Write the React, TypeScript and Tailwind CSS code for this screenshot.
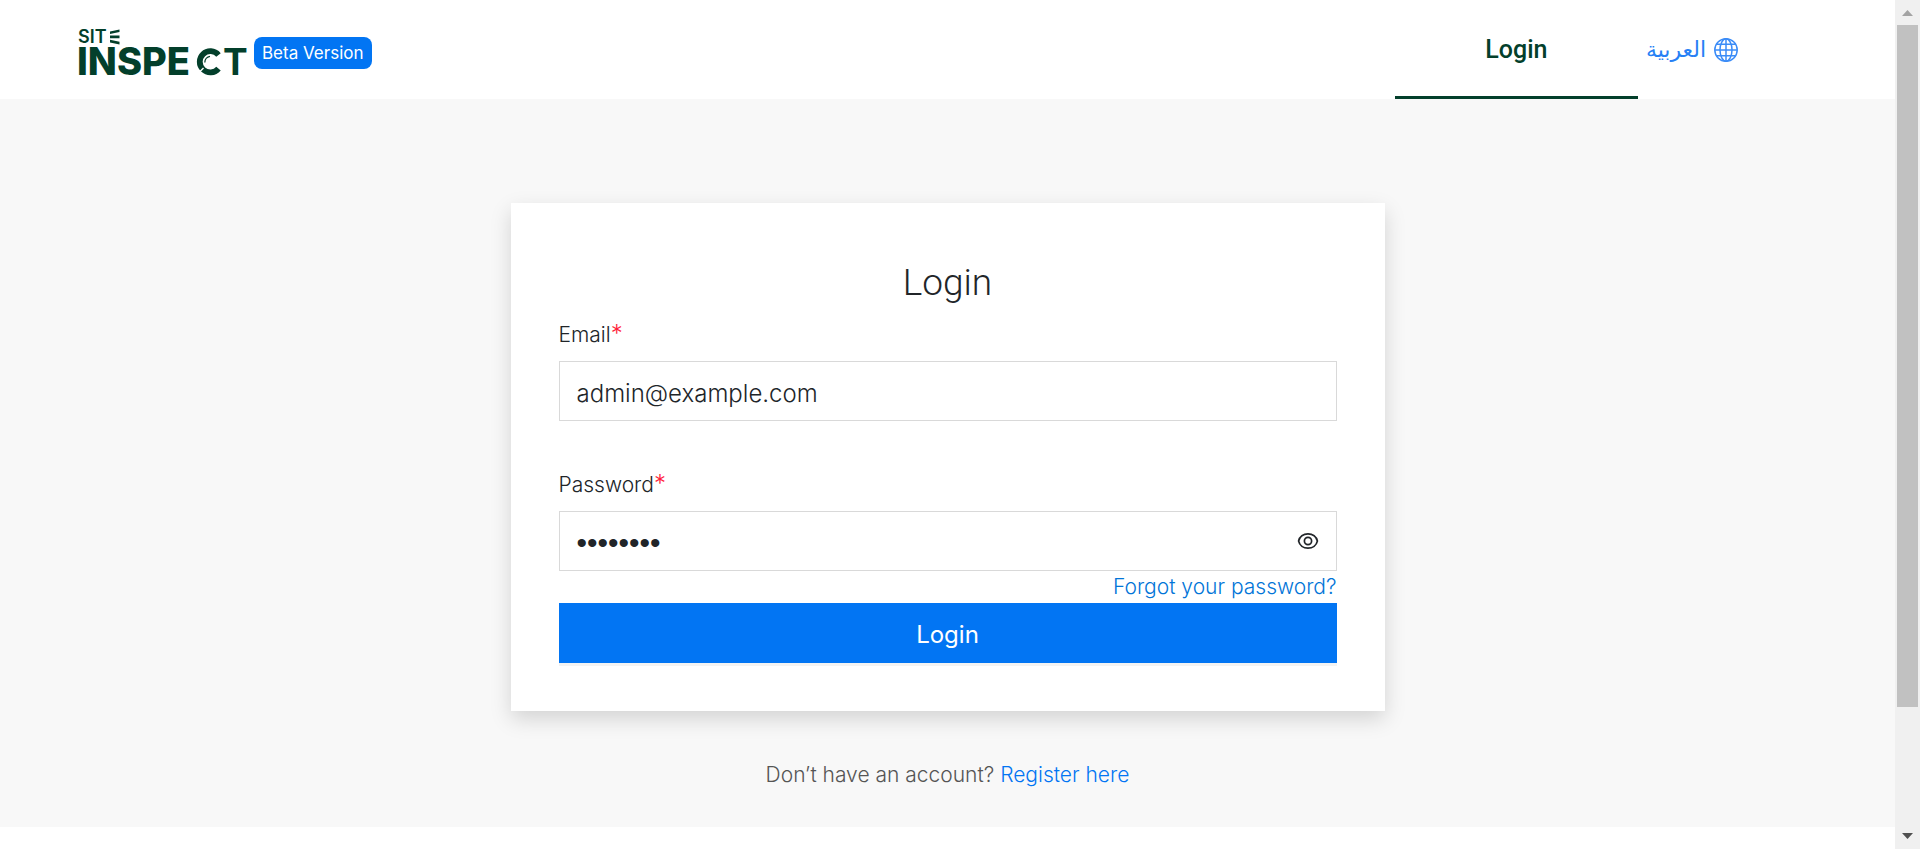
import React, { useState } from "react";

function Logo() {
  return (
    <svg
      viewBox="0 0 170 50"
      role="img"
      aria-label="Site Inspect"
      className="h-[50px] w-[170px] overflow-visible fill-[#033f2b] font-['Inter',sans-serif]"
    >
      <text x="-1" y="15" fontSize="18" fontWeight="600">SIT</text>
      <path d="M31 3.4 L40.5 1.4 V4 L31 6 Z M31 7.6 H40.5 V10.2 H31 Z M31 11.8 L40.5 13.8 V16.4 L31 14.4 Z" />
      <text x="-2" y="47" fontSize="38" fontWeight="800">INSPE</text>
      <path
        d="M139.5 27 A10.6 10.6 0 1 0 139.5 40.6"
        fill="none"
        stroke="#033f2b"
        strokeWidth="5.8"
      />
      <path d="M118.5 46 L124.5 40" stroke="#ffffff" strokeWidth="1.4" />
      <path
        d="M125.8 34.6 A6.2 6.2 0 0 1 131 28.4"
        fill="none"
        stroke="#033f2b"
        strokeWidth="1.3"
      />
      <text x="144" y="47" fontSize="37" fontWeight="700">T</text>
    </svg>
  );
}

function GlobeIcon() {
  return (
    <svg
      viewBox="0 0 24 24"
      aria-hidden="true"
      className="size-6 fill-none stroke-[#3b8cf7] stroke-[1.5]"
    >
      <circle cx="12" cy="12" r="11.2" />
      <ellipse cx="12" cy="12" rx="6" ry="11.2" />
      <path d="M12 .8V23.2M.8 12H23.2M2.8 6.2H21.2M2.8 17.8H21.2" />
    </svg>
  );
}

function EyeIcon() {
  return (
    <svg
      viewBox="0 0 22 18"
      aria-hidden="true"
      className="h-[18px] w-[22px] fill-none stroke-[#212529] stroke-[1.7]"
    >
      <path d="M1.6 9C2.6 4.6 6.4 1.8 11 1.8S19.4 4.6 20.4 9C19.4 13.4 15.6 16.2 11 16.2S2.6 13.4 1.6 9Z" />
      <circle cx="11" cy="9" r="3.6" />
    </svg>
  );
}

function Required() {
  return <span className="text-2xl leading-none text-[#ff1f3d]">*</span>;
}

const labelClass = "block text-[21px] leading-8 text-[#212529]";
const inputClass =
  "block h-[60px] w-full border border-[#d9d9d9] bg-white pl-[17px] text-[#212529] outline-none";

export default function App() {
  const [visible, setVisible] = useState(false);

  return (
    <div className="flex h-screen overflow-hidden bg-white font-['Inter','DejaVu_Sans',sans-serif] font-light">
      <div className="min-w-0 flex-1">
        <header className="flex h-[99px] items-stretch justify-between bg-white pr-[157px] pl-[79px]">
          <div className="flex items-center gap-[5px] pt-1.5">
            <Logo />
            <span className="rounded-lg bg-[#0275f3] px-2 py-1 text-[17px] leading-6 font-normal text-white">
              Beta Version
            </span>
          </div>
          <nav className="flex items-stretch gap-2">
            <a
              href="#login"
              className="flex w-[243px] items-center justify-center border-b-3 border-[#033f2b] pt-1 font-['Roboto',sans-serif] text-[25px] font-medium text-[#033f2b]"
            >
              Login
            </a>
            <a
              href="#ar"
              className="flex items-center gap-2 text-[22px] font-normal text-[#2680f5]"
            >
              <span lang="ar">العربية</span>
              <GlobeIcon />
            </a>
          </nav>
        </header>

        <main className="flex flex-col items-center bg-[#f8f8f8] pt-[104px] pb-9">
          <form
            onSubmit={(e) => e.preventDefault()}
            className="w-full max-w-[874px] bg-white p-12 shadow-[0_8px_20px_rgba(0,0,0,0.15)]"
          >
            <h1 className="pt-2 text-center font-['Roboto',sans-serif] text-[37px] leading-12 font-light text-[#212529]">
              Login
            </h1>

            <div className="pt-3">
              <label htmlFor="email" className={labelClass}>
                Email
                <Required />
              </label>
              <div className="pt-2.5">
                <input
                  id="email"
                  type="email"
                  defaultValue="admin@example.com"
                  className={`${inputClass} pt-1 text-2xl`}
                />
              </div>
            </div>

            <div className="pt-12">
              <label htmlFor="password" className={labelClass}>
                Password
                <Required />
              </label>
              <div className="relative mt-2.5">
                <input
                  id="password"
                  type={visible ? "text" : "password"}
                  defaultValue="password"
                  className={
                    visible
                      ? `${inputClass} pt-1 text-2xl`
                      : `${inputClass} pt-1 font-['Liberation_Sans',sans-serif] text-3xl`
                  }
                />
                <button
                  type="button"
                  aria-label="Show password"
                  onClick={() => setVisible(!visible)}
                  className="absolute inset-y-0 right-[18px] flex items-center"
                >
                  <EyeIcon />
                </button>
              </div>
            </div>

            <div className="text-right text-[21px] leading-8">
              <a href="#forgot" className="text-[#0275d8]">
                Forgot your password?
              </a>
            </div>

            <button
              type="submit"
              className="block h-[60px] w-full bg-[#0275f3] pt-1 text-2xl font-normal text-white shadow-[0_3px_0_#f3f3f3]"
            >
              Login
            </button>
          </form>

          <p className="pt-12 text-[21px] leading-8 text-[#555555]">
            Don’t have an account?{" "}
            <a href="#register" className="text-[#0275f3]">
              Register here
            </a>
          </p>
        </main>
      </div>

      <div
        aria-hidden="true"
        className="flex w-[25px] flex-col items-center bg-[#f0f0f0]"
      >
        <svg viewBox="0 0 25 25" className="size-[25px] shrink-0 fill-[#a3a3a3]">
          <path d="M7 16H18L12.5 10Z" />
        </svg>
        <div className="w-[21px] grow-[853] basis-0 bg-[#c1c1c1]" />
        <div className="grow-[147] basis-0" />
        <svg viewBox="0 0 25 25" className="size-[25px] shrink-0 fill-[#505050]">
          <path d="M7 9H18L12.5 15Z" />
        </svg>
      </div>
    </div>
  );
}
